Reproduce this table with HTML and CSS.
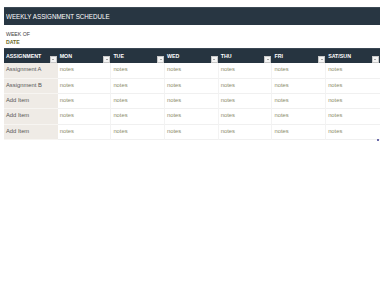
FILE: index.html
```html
<!DOCTYPE html>
<html>
<head>
<meta charset="utf-8">
<link rel="stylesheet" href="styles.css">
</head>
<body>
<div class="sheet">
  <div class="title"><span class="title-text">WEEKLY ASSIGNMENT SCHEDULE</span></div>
  <div class="week">
    <div class="week-label">WEEK OF</div>
    <div class="week-date">DATE</div>
  </div>
  <div class="grid">
    <div class="hcell">ASSIGNMENT<span class="dd"></span></div>
    <div class="hcell">MON<span class="dd"></span></div>
    <div class="hcell">TUE<span class="dd"></span></div>
    <div class="hcell">WED<span class="dd"></span></div>
    <div class="hcell">THU<span class="dd"></span></div>
    <div class="hcell">FRI<span class="dd"></span></div>
    <div class="hcell">SAT/SUN<span class="dd"></span></div>

    <div class="name">Assignment A</div>
    <div class="note">notes</div><div class="note">notes</div><div class="note">notes</div><div class="note">notes</div><div class="note">notes</div><div class="note last">notes</div>

    <div class="name">Assignment B</div>
    <div class="note">notes</div><div class="note">notes</div><div class="note">notes</div><div class="note">notes</div><div class="note">notes</div><div class="note last">notes</div>

    <div class="name">Add Item</div>
    <div class="note">notes</div><div class="note">notes</div><div class="note">notes</div><div class="note">notes</div><div class="note">notes</div><div class="note last">notes</div>

    <div class="name">Add Item</div>
    <div class="note">notes</div><div class="note">notes</div><div class="note">notes</div><div class="note">notes</div><div class="note">notes</div><div class="note last">notes</div>

    <div class="name">Add Item</div>
    <div class="note">notes</div><div class="note">notes</div><div class="note">notes</div><div class="note">notes</div><div class="note">notes</div><div class="note last">notes<span class="handle"></span></div>
  </div>
</div>
</body>
</html>
```
FILE: styles.css
```css
html, body {
  margin: 0;
  padding: 0;
  background: #ffffff;
}
body {
  font-family: "Liberation Sans", Arial, sans-serif;
  width: 380px;
  height: 295px;
  overflow: hidden;
}
.sheet {
  padding: 7px 0 0 4px;
}
.title {
  display: flex;
  align-items: center;
  background: #283642;
  color: #ffffff;
  height: 18px;
  padding-left: 2px;
  border-top: 0.5px solid #3c4955;
  box-sizing: border-box;
}
.title-text {
  display: inline-block;
  font-size: 7.8px;
  line-height: 1;
  transform: scaleX(0.8);
  transform-origin: left center;
  white-space: nowrap;
}
.week {
  height: 23px;
  padding: 5px 0 0 2px;
  box-sizing: border-box;
  font-size: 5.2px;
}
.week-label {
  color: #404040;
  line-height: 8px;
}
.week-date {
  color: #6b6a2b;
  font-weight: bold;
  line-height: 8px;
}
.grid {
  display: grid;
  grid-template-columns: repeat(7, 53.7px);
  grid-template-rows: 15.3px repeat(5, 15.4px);
}
.hcell {
  position: relative;
  background: #263440;
  color: #ffffff;
  font-size: 5.3px;
  font-weight: bold;
  padding: 3.5px 0 0 2px;
  box-sizing: border-box;
  border-top: 1px solid #3a4754;
}
.dd {
  position: absolute;
  right: 1px;
  bottom: 0;
  width: 5px;
  height: 5px;
  background: #f4f4f4;
  border: 0.5px solid #c8c8c8;
}
.dd::after {
  content: "";
  position: absolute;
  left: 1.5px;
  top: 2px;
  border-left: 1px solid transparent;
  border-right: 1px solid transparent;
  border-top: 1px solid #555;
}
.name {
  background: #efebe6;
  color: #555555;
  font-size: 5.8px;
  padding: 3px 0 0 2px;
  box-sizing: border-box;
  border-bottom: 1px solid #f7f5f2;
}
.note {
  position: relative;
  color: #8c8b6a;
  font-size: 5.8px;
  padding: 3px 0 0 2px;
  box-sizing: border-box;
  border-bottom: 1px solid #f0f0f0;
  border-right: 1px solid #f3f3f3;
}
.note.last {
  border-right: none;
}
.handle {
  position: absolute;
  right: 1px;
  bottom: -2px;
  width: 2px;
  height: 2px;
  background: #6a6aa8;
}
```
